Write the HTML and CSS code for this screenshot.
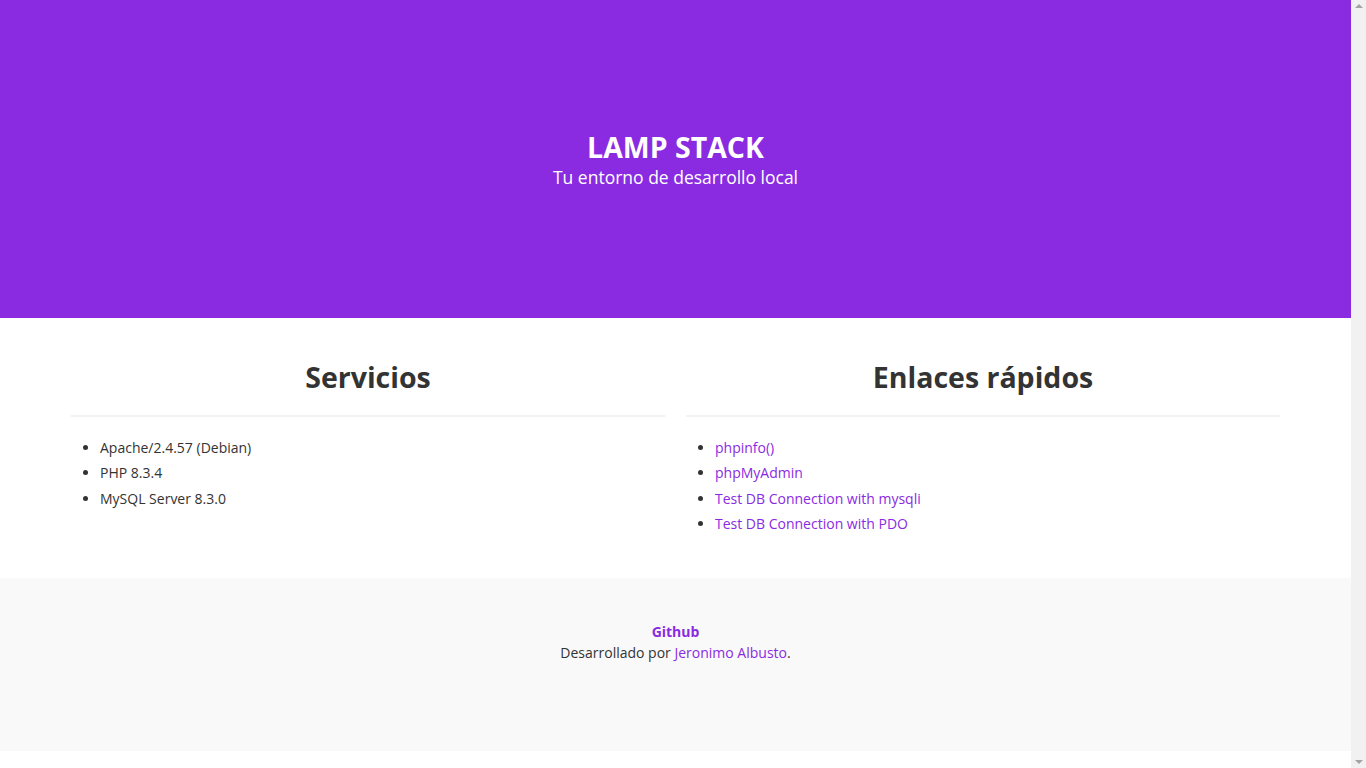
FILE: index.html
```html
<!DOCTYPE html>
<html lang="es">
<head>
<meta charset="utf-8">
<title>LAMP STACK</title>
<link rel="stylesheet" href="styles.css">
</head>
<body>
<div class="page">
  <header class="hero">
    <h1 class="hero-title">LAMP STACK</h1>
    <p class="hero-subtitle">Tu entorno de desarrollo local</p>
  </header>
  <main class="content">
    <section class="column">
      <h2 class="column-title">Servicios</h2>
      <ul class="list">
        <li>Apache/2.4.57 (Debian)</li>
        <li>PHP 8.3.4</li>
        <li>MySQL Server 8.3.0</li>
      </ul>
    </section>
    <section class="column">
      <h2 class="column-title">Enlaces rápidos</h2>
      <ul class="list">
        <li><a href="#">phpinfo()</a></li>
        <li><a href="#">phpMyAdmin</a></li>
        <li><a href="#">Test DB Connection with mysqli</a></li>
        <li><a href="#">Test DB Connection with PDO</a></li>
      </ul>
    </section>
  </main>
  <footer class="footer">
    <p class="footer-line"><a class="footer-strong" href="#">Github</a></p>
    <p class="footer-line">Desarrollado por <a href="#">Jeronimo Albusto</a>.</p>
  </footer>
</div>
<div class="scrollbar" aria-hidden="true">
  <span class="scroll-arrow scroll-up"></span>
  <span class="scroll-arrow scroll-down"></span>
</div>
</body>
</html>
```
FILE: styles.css
```css
html, body {
  margin: 0;
  height: 100%;
  overflow: hidden;
}
body {
  font-family: "Open Sans", "Noto Sans", sans-serif;
  color: #333333;
  background: #ffffff;
}
a {
  color: #8a2be2;
  text-decoration: none;
}
.page {
  width: 1351px;
}
.hero {
  background: #8a2be2;
  color: #ffffff;
  height: 318px;
  box-sizing: border-box;
  padding-top: 127px;
  text-align: center;
}
.hero-title {
  margin: 0;
  font-size: 28.5px;
  font-weight: 700;
  line-height: 40px;
}
.hero-subtitle {
  margin: 0;
  font-size: 17.5px;
  line-height: 21px;
}
.content {
  width: 1209px;
  margin: 0 auto;
  display: grid;
  grid-template-columns: 1fr 1fr;
  column-gap: 21px;
  padding: 38px 0 42px;
}
.column-title {
  margin: 0;
  text-align: center;
  font-size: 28.5px;
  font-weight: 700;
  line-height: 42px;
  padding-bottom: 17px;
  border-bottom: 2px solid #f2f2f2;
}
.list {
  margin: 18px 0 0;
  padding-left: 29px;
  font-size: 14px;
  line-height: 25.3px;
}
.footer {
  background: #f9f9f9;
  height: 173px;
  box-sizing: border-box;
  padding-top: 43px;
  text-align: center;
  font-size: 14px;
  line-height: 21px;
}
.footer-line {
  margin: 0;
}
.footer-strong {
  font-weight: 700;
}
.scrollbar {
  position: fixed;
  top: 0;
  right: 0;
  width: 15px;
  height: 100vh;
  background: #f1f1f1;
  display: flex;
  flex-direction: column;
  justify-content: space-between;
  align-items: center;
  padding: 4px 0;
  box-sizing: border-box;
}
.scroll-arrow {
  width: 0;
  height: 0;
  border-left: 4px solid transparent;
  border-right: 4px solid transparent;
}
.scroll-up {
  border-bottom: 4px solid #a3a3a3;
}
.scroll-down {
  border-top: 4px solid #a3a3a3;
}
```
